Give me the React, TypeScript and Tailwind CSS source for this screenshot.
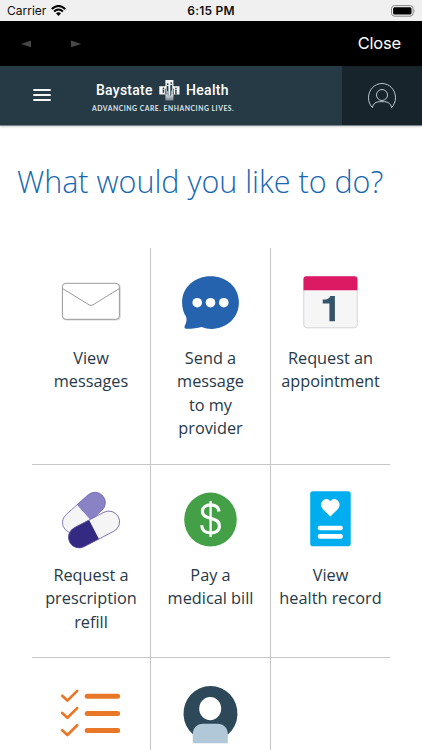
import type { ReactNode } from "react";

type Action = { id: string; lines: string[]; icon: ReactNode };

const iconClass = "block h-16 w-16 shrink-0 overflow-visible";

function EnvelopeIcon() {
  return (
    <svg className={iconClass} viewBox="59 272 64 64" fill="none">
      <rect x="63.1" y="284" width="57" height="36" rx="3.5" stroke="#d4d4d4" strokeWidth="1.2" />
      <rect x="62.4" y="283.3" width="57" height="36" rx="3.5" fill="#fff" stroke="#8e8e8e" strokeWidth="0.9" />
      <path d="M62.6 288.6 L89 304.8 Q91 306.2 93 304.8 L119.3 288.6" stroke="#8e8e8e" strokeWidth="0.9" />
    </svg>
  );
}

function ChatIcon() {
  return (
    <svg className={iconClass} viewBox="179 272 64 64">
      <path
        d="M210.6 276.3 C226.4 276.3 238.9 287 238.9 302.6 C238.9 318 226.6 328.9 211.5 328.9 C208 328.9 205 328.2 201.5 327 C197 328 191.5 329 186.3 328.8 C184.2 328.6 184.1 326.8 185 325.2 C186.6 322.2 187 319.4 186 316.6 C183.4 312.8 182.1 307.8 182.1 302.6 C182.1 287 195 276.3 210.6 276.3 Z"
        fill="#2563ae"
      />
      <circle cx="197.2" cy="302.7" r="4.8" fill="#fff" />
      <circle cx="210.5" cy="302.7" r="4.8" fill="#fff" />
      <circle cx="223.8" cy="302.7" r="4.8" fill="#fff" />
    </svg>
  );
}

function CalendarIcon() {
  return (
    <svg className={iconClass} viewBox="299 272 64 64">
      <rect x="303.8" y="276.8" width="53.4" height="51" rx="2.8" fill="#f6f6f7" stroke="#d3d3d5" strokeWidth="0.9" />
      <path d="M303.5 290.3 V279 Q303.5 276.3 306.3 276.3 H354.6 Q357.4 276.3 357.4 279 V290.3 Z" fill="#dc1a63" />
      <path d="M330.4 296 H334.9 V321.2 H329.4 V303.4 H322.7 V299.6 C326.6 299.6 329.6 298.8 330.4 296 Z" fill="#34566c" />
    </svg>
  );
}

function PillsIcon() {
  return (
    <svg className={iconClass} viewBox="59 489 64 64">
      <g transform="translate(83.9 512.6) rotate(-42)">
        <rect x="-25.3" y="-10.4" width="50.6" height="20.8" rx="10.4" fill="#f5f5f6" />
        <path d="M0 -10.4 H14.9 A10.4 10.4 0 0 1 14.9 10.4 H0 Z" fill="#8983c5" />
        <rect x="-25.3" y="-10.4" width="50.6" height="20.8" rx="10.4" fill="none" stroke="#655cae" strokeWidth="0.7" />
      </g>
      <g transform="translate(94 529.5) rotate(-27.5)">
        <rect x="-27.5" y="-10.7" width="55" height="21.4" rx="10.7" fill="#f5f5f6" />
        <path d="M0 -10.7 H-16.8 A10.7 10.7 0 0 0 -16.8 10.7 H0 Z" fill="#342a81" />
        <rect x="-27.5" y="-10.7" width="55" height="21.4" rx="10.7" fill="none" stroke="#5f4f9d" strokeWidth="0.7" />
      </g>
    </svg>
  );
}

function DollarIcon() {
  return (
    <svg className={iconClass} viewBox="179 489 64 64" fill="none">
      <ellipse cx="210.5" cy="519.6" rx="26.3" ry="27" fill="#43a047" />
      <path d="M210.6 501 V537" stroke="#fff" strokeWidth="2.3" />
      <path
        d="M219 511.5 C218.5 507.3 215.4 504.9 210.7 504.9 C205.8 504.9 202.4 507.5 202.4 511.6 C202.4 520.6 219.4 515.8 219.4 526 C219.4 530.6 215.8 533 210.8 533 C205.3 533 201.9 530.2 201.7 525.3"
        stroke="#fff"
        strokeWidth="3.1"
      />
    </svg>
  );
}

function RecordIcon() {
  return (
    <svg className={iconClass} viewBox="299 489 64 64">
      <rect x="310.2" y="491.2" width="40.5" height="55" rx="2.8" fill="#00aeef" />
      <path
        d="M330.3 516.6 L323.2 509.4 C318.6 504.6 322.6 499 326.5 499 C328.4 499 329.6 500 330.3 501.3 C331 500 332.3 499 334.2 499 C338.2 499 342.1 504.6 337.5 509.4 Z"
        fill="#fff"
      />
      <rect x="317.8" y="525.7" width="25" height="4.6" rx="2" fill="#fff" />
      <rect x="317.8" y="534.1" width="25" height="4.6" rx="2" fill="#fff" />
    </svg>
  );
}

function ChecklistIcon() {
  return (
    <svg className={iconClass} viewBox="59 682 64 64" fill="none" stroke="#e87728" strokeLinecap="round" strokeLinejoin="round">
      {[696.2, 713.4, 730.6].map((y) => (
        <g key={y} transform={`translate(0 ${y})`}>
          <path d="M62.2 -0.4 L67.4 4.4 L77.2 -5.3" strokeWidth="2.7" />
          <path d="M87.2 0 H117.6" strokeWidth="5" />
        </g>
      ))}
    </svg>
  );
}

function PersonIcon() {
  return (
    <svg className={iconClass} viewBox="179 682 64 64">
      <path d="M193 734.6 A27 27.6 0 1 1 228 734.6 Z" fill="#2d4858" />
      <ellipse cx="210.2" cy="708.6" rx="11" ry="11.6" fill="#fff" />
      <path d="M192.8 743.3 V734.4 C192.8 728 196.8 723.8 203.2 723.8 H217.4 C223.8 723.8 227.8 728 227.8 734.4 V743.3 Z" fill="#b0c8d7" />
    </svg>
  );
}

const rows: { height: string; actions: Action[] }[] = [
  {
    height: "h-[217px]",
    actions: [
      { id: "messages", lines: ["View", "messages"], icon: <EnvelopeIcon /> },
      { id: "send", lines: ["Send a", "message", "to my", "provider"], icon: <ChatIcon /> },
      { id: "appointment", lines: ["Request an", "appointment"], icon: <CalendarIcon /> },
    ],
  },
  {
    height: "h-[193px]",
    actions: [
      { id: "refill", lines: ["Request a", "prescription", "refill"], icon: <PillsIcon /> },
      { id: "bill", lines: ["Pay a", "medical bill"], icon: <DollarIcon /> },
      { id: "record", lines: ["View", "health record"], icon: <RecordIcon /> },
    ],
  },
  {
    height: "h-[92px]",
    actions: [
      { id: "checklist", lines: [], icon: <ChecklistIcon /> },
      { id: "person", lines: [], icon: <PersonIcon /> },
      { id: "empty", lines: [], icon: null },
    ],
  },
];

function StatusBar() {
  return (
    <div className="grid h-[21px] grid-cols-3 items-center bg-[#f0f0f0] font-[Inter,sans-serif] text-[12px] leading-none text-[#111]">
      <div className="flex items-center gap-[5px] pl-[7px]">
        <span>Carrier</span>
        <svg className="h-[11px] w-[15px]" viewBox="0 0 15 11" fill="none" stroke="#000">
          <path d="M0.8 4 Q7.5 -2 14.2 4" strokeWidth="2.1" />
          <path d="M3.1 6.5 Q7.5 2.5 11.9 6.5" strokeWidth="2" />
          <path d="M7.5 10.9 L5 8.3 Q7.5 6.3 10 8.3 Z" fill="#000" stroke="none" />
        </svg>
      </div>
      <span className="text-center font-semibold tracking-[0.2px]">6:15 PM</span>
      <div className="flex justify-end pr-[6px]">
        <svg className="h-3 w-[25px]" viewBox="0 0 25 12">
          <rect x="0.5" y="0.6" width="21.6" height="10.6" rx="3" fill="none" stroke="#858585" />
          <rect x="2.1" y="2.2" width="18.4" height="7.4" rx="1.5" fill="#000" />
          <path d="M23.2 4.2 Q24.6 5.9 23.2 7.6 Z" fill="#858585" />
        </svg>
      </div>
    </div>
  );
}

function BrowserBar() {
  return (
    <div className="flex h-[45px] items-center justify-between bg-black pr-[21px] pl-[21px]">
      <svg className="h-2 w-[61px]" viewBox="0 0 61 8" fill="#474747">
        <path d="M10 0.5 V7.2 L0 3.9 Z M50 0.5 V7.2 L60.3 3.9 Z" />
      </svg>
      <span className="font-[Inter,sans-serif] text-[16.5px] leading-none tracking-[-0.2px] text-white">Close</span>
    </div>
  );
}

function LogoMark() {
  return (
    <svg className="h-[22px] w-[21px] shrink-0" viewBox="0 0 21 22">
      <defs>
        <linearGradient id="markFade" x1="0" y1="0" x2="0" y2="1">
          <stop offset="0.65" stopColor="#f1f5f6" />
          <stop offset="1" stopColor="#72828b" />
        </linearGradient>
      </defs>
      <rect x="0.3" y="7.2" width="20.2" height="8.3" fill="#f1f5f6" />
      <rect x="6.4" y="1" width="8" height="20.5" fill="url(#markFade)" />
      <g fill="#273c49">
        <circle cx="4.4" cy="9.4" r="0.8" />
        <path d="M3.7 10.6 H5.1 V13.8 H3.7 Z" />
        <circle cx="8.7" cy="5.2" r="0.9" />
        <path d="M7.7 7 H9.4 V16.6 H8.8 V12 H8.2 V15.6 H7.5 Z" />
        <circle cx="12.2" cy="4.1" r="0.9" />
        <path d="M11.3 6 H13.2 V15.6 H12.6 V11.5 H12 V16.8 H11.3 Z" />
        <path d="M6.4 9.5 V15.5 M14.4 9.5 V15.5" stroke="#273c49" strokeWidth="0.7" />
        <circle cx="16.9" cy="9.4" r="0.8" />
        <path d="M16.2 10.6 H17.6 V15.5 H16.2 Z" />
      </g>
    </svg>
  );
}

function SiteHeader() {
  return (
    <header className="flex h-[60px] border-b border-[#77828a] bg-[#263a46] shadow-[0_1px_2px_rgba(0,0,0,0.18)]">
      <button className="flex w-[84px] items-center justify-center pb-[2px]" aria-label="Menu">
        <svg className="h-[14px] w-[18px]" viewBox="0 0 18 14" stroke="#f4f6f7" strokeWidth="1.8">
          <path d="M0.3 2 H17.7 M0.3 7 H17.7 M0.3 12 H17.7" />
        </svg>
      </button>
      <div className="flex flex-1 flex-col pt-[13px] pl-2 text-white">
        <div className="flex h-[22px] items-center pl-1 font-[Roboto,sans-serif] text-[14px] leading-none font-medium">
          <span className="w-[63px] tracking-[0.25px] whitespace-nowrap">Baystate</span>
          <LogoMark />
          <span className="pl-[6px] tracking-[0.3px]">Health</span>
        </div>
        <span className="mt-[2px] font-[Lato,sans-serif] text-[6.8px] leading-[11px] font-bold tracking-[0.53px] whitespace-nowrap text-[#dce3e7]">
          ADVANCING CARE. ENHANCING LIVES.
        </span>
      </div>
      <button className="flex w-20 items-center justify-center bg-[#17242c]" aria-label="Account">
        <svg className="h-[30px] w-[30px]" viewBox="0 0 30 30" fill="none" stroke="#bdc6cc" strokeWidth="1">
          <path d="M5.4 26.6 C2.9 23.8 1.5 20.6 1.5 16.8 C1.5 8.8 7.5 2.5 15 2.5 C22.5 2.5 28.5 8.8 28.5 16.8 C28.5 20.6 27.1 23.8 24.6 26.6 C24.1 23 21.3 20.7 17.6 20.7 H12.4 C8.7 20.7 5.9 23 5.4 26.6 Z" />
          <circle cx="15" cy="14" r="5.5" />
        </svg>
      </button>
    </header>
  );
}

function ActionCell({ action, last }: { action: Action; last: boolean }) {
  return (
    <div className={last ? "flex flex-col items-center pt-6" : "flex flex-col items-center border-r border-[#c6c6c6] pt-6"}>
      {action.icon}
      <div className="mt-[11px] text-center text-[16.3px] leading-[23.4px] whitespace-nowrap text-[#263947]">
        {action.lines.map((line) => (
          <div key={line}>{line}</div>
        ))}
      </div>
    </div>
  );
}

export default function App() {
  return (
    <div className="flex h-[750px] w-[422px] flex-col overflow-hidden bg-white font-['Open_Sans',sans-serif]">
      <StatusBar />
      <BrowserBar />
      <SiteHeader />
      <main className="flex flex-col">
        <h1 className="mt-[33px] h-[89px] pl-[17px] text-[30.5px] leading-[44px] font-light whitespace-nowrap text-[#1768b3]">
          What would you like to do?
        </h1>
        <div className="ml-8 w-[358px]">
          {rows.map((row, index) => (
            <div
              key={index}
              className={`grid grid-cols-[119px_120px_119px] ${row.height} ${index < 2 ? "border-b border-[#c6c6c6]" : ""}`}
            >
              {row.actions.map((action, column) => (
                <ActionCell key={action.id} action={action} last={column === 2} />
              ))}
            </div>
          ))}
        </div>
      </main>
    </div>
  );
}
